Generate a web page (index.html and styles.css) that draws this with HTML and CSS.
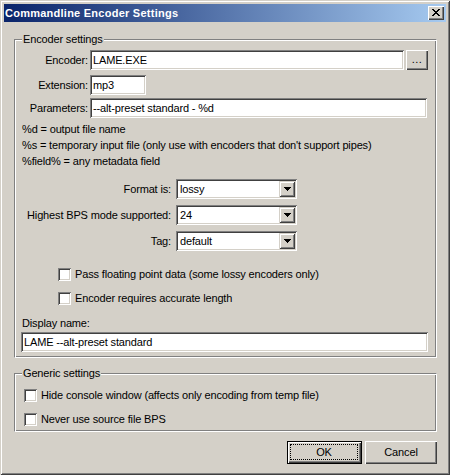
FILE: index.html
```html
<!DOCTYPE html>
<html>
<head>
<meta charset="utf-8">
<link rel="stylesheet" href="styles.css">
</head>
<body>
<div class="window">
  <div class="titlebar">
    <span class="title">Commandline Encoder Settings</span>
    <div class="close">
      <svg width="8" height="7" viewBox="0 0 8 7" shape-rendering="crispEdges"><path d="M0 0h2v1H0zM6 0h2v1H6zM1 1h2v1H1zM5 1h2v1H5zM2 2h4v1H2zM3 3h2v1H3zM2 4h4v1H2zM1 5h2v1H1zM5 5h2v1H5zM0 6h2v1H0zM6 6h2v1H6z" fill="#000"/></svg>
    </div>
  </div>
  <div class="client">
    <div class="group encoder">
      <span class="legend">Encoder settings</span>
      <div class="form-grid">
        <span class="lbl">Encoder:</span>
        <div class="row-enc"><div class="edit w-enc">LAME.EXE</div><div class="btn browse">...</div></div>
        <span class="lbl r2">Extension:</span>
        <div class="edit w-ext r2">mp3</div>
        <span class="lbl r3">Parameters:</span>
        <div class="edit w-par r3">--alt-preset standard - %d</div>
      </div>
      <div class="help">
        <div>%d = output file name</div>
        <div>%s = temporary input file (only use with encoders that don't support pipes)</div>
        <div>%field% = any metadata field</div>
      </div>
      <div class="combo-grid">
        <span class="lbl">Format is:</span>
        <div class="combo"><span class="val">lossy</span><div class="drop"><svg width="7" height="4" viewBox="0 0 7 4" shape-rendering="crispEdges"><path d="M0 0h7v1H0zM1 1h5v1H1zM2 2h3v1H2zM3 3h1v1H3z" fill="#000"/></svg></div></div>
        <span class="lbl">Highest BPS mode supported:</span>
        <div class="combo"><span class="val">24</span><div class="drop"><svg width="7" height="4" viewBox="0 0 7 4" shape-rendering="crispEdges"><path d="M0 0h7v1H0zM1 1h5v1H1zM2 2h3v1H2zM3 3h1v1H3z" fill="#000"/></svg></div></div>
        <span class="lbl">Tag:</span>
        <div class="combo"><span class="val">default</span><div class="drop"><svg width="7" height="4" viewBox="0 0 7 4" shape-rendering="crispEdges"><path d="M0 0h7v1H0zM1 1h5v1H1zM2 2h3v1H2zM3 3h1v1H3z" fill="#000"/></svg></div></div>
      </div>
      <div class="checks enc-checks">
        <div class="check"><span class="box"></span><span>Pass floating point data (some lossy encoders only)</span></div>
        <div class="check"><span class="box"></span><span>Encoder requires accurate length</span></div>
      </div>
      <div class="disp-label">Display name:</div>
      <div class="edit w-disp">LAME --alt-preset standard</div>
    </div>
    <div class="group generic">
      <span class="legend">Generic settings</span>
      <div class="checks gen-checks">
        <div class="check"><span class="box"></span><span>Hide console window (affects only encoding from temp file)</span></div>
        <div class="check"><span class="box"></span><span>Never use source file BPS</span></div>
      </div>
    </div>
    <div class="buttons">
      <div class="btn default"><span class="focus">OK</span></div>
      <div class="btn cancel">Cancel</div>
    </div>
  </div>
</div>
</body>
</html>
```
FILE: styles.css
```css
* { box-sizing: border-box; }
html, body { margin: 0; padding: 0; background: #d4d0c8; }
body {
  font-family: "Liberation Sans", Arial, sans-serif;
  font-size: 11px;
  line-height: 13px;
  letter-spacing: -0.15px;
  color: #000;
}
.window {
  width: 450px;
  height: 475px;
  padding: 4px;
  background: #d4d0c8;
  box-shadow: inset 1px 1px 0 #d4d0c8, inset -1px -1px 0 #404040, inset 2px 2px 0 #fff, inset -2px -2px 0 #808080;
  display: flex;
  flex-direction: column;
}
.titlebar {
  height: 18px;
  flex: none;
  background: linear-gradient(to right, #0a246a, #a6caf0);
  display: flex;
  align-items: center;
  justify-content: space-between;
  padding: 0 2px 0 1px;
}
.title {
  color: #fff;
  font-weight: bold;
  font-size: 11px;
  letter-spacing: 0.25px;
}
.close {
  width: 16px;
  height: 14px;
  background: #d4d0c8;
  box-shadow: inset 1px 1px 0 #fff, inset -1px -1px 0 #404040, inset -2px -2px 0 #808080;
  display: flex;
  align-items: center;
  justify-content: center;
  padding: 0 1px 1px 0;
}
.close svg { display: block; }
.client {
  flex: 1;
  display: flex;
  flex-direction: column;
  padding: 0 9px 0 10px;
}
.group {
  position: relative;
  border-top: 1px solid #808080;
  border-left: 1px solid #808080;
  border-bottom: 1px solid #fff;
  border-right: 1px solid #fff;
  box-shadow: inset 1px 1px 0 #fff, inset -1px -1px 0 #808080;
}
.legend {
  position: absolute;
  top: -7px;
  left: 7px;
  padding: 0 1px;
  background: #d4d0c8;
  line-height: 13px;
}
.encoder {
  margin-top: 17px;
  height: 319px;
  padding: 10px 0 0 0;
}
.edit {
  height: 20px;
  background: #fff;
  box-shadow: inset 1px 1px 0 #808080, inset -1px -1px 0 #fff, inset 2px 2px 0 #404040, inset -2px -2px 0 #d4d0c8;
  padding: 0 3px;
  display: flex;
  align-items: center;
  white-space: nowrap;
  overflow: hidden;
}
.form-grid {
  display: grid;
  grid-template-columns: 73px auto;
  column-gap: 2px;
  align-items: center;
  justify-items: start;
}
.form-grid .lbl { justify-self: end; }
.form-grid .r2 { margin-top: 5px; }
.form-grid .r3 { margin-top: 3px; }
.row-enc { display: flex; gap: 2px; }
.w-enc { width: 314px; }
.w-ext { width: 56px; }
.w-par { width: 337px; }
.btn {
  background: #d4d0c8;
  box-shadow: inset 1px 1px 0 #fff, inset -1px -1px 0 #404040, inset -2px -2px 0 #808080;
  display: flex;
  align-items: center;
  justify-content: center;
}
.browse {
  width: 22px;
  height: 20px;
  padding-bottom: 2px;
  letter-spacing: 0.5px;
}
.help {
  margin-top: 3px;
  padding-left: 7px;
  line-height: 16px;
}
.combo-grid {
  margin-top: 10px;
  display: grid;
  grid-template-columns: 156px 121px;
  column-gap: 5px;
  row-gap: 6px;
  align-items: center;
}
.combo-grid .lbl { justify-self: end; }
.combo {
  height: 20px;
  background: #fff;
  box-shadow: inset 1px 1px 0 #808080, inset -1px -1px 0 #fff, inset 2px 2px 0 #404040, inset -2px -2px 0 #d4d0c8;
  display: flex;
  align-items: center;
  padding: 2px;
}
.combo .val { flex: 1; padding-left: 2px; }
.drop {
  width: 16px;
  height: 16px;
  background: #d4d0c8;
  box-shadow: inset 1px 1px 0 #d4d0c8, inset -1px -1px 0 #404040, inset 2px 2px 0 #fff, inset -2px -2px 0 #808080;
  display: flex;
  align-items: center;
  justify-content: center;
}
.drop svg { display: block; }
.checks { display: flex; flex-direction: column; gap: 11px; }
.check { display: flex; align-items: center; gap: 4px; height: 13px; }
.box {
  width: 13px;
  height: 13px;
  flex: none;
  background: #fff;
  box-shadow: inset 1px 1px 0 #808080, inset -1px -1px 0 #fff, inset 2px 2px 0 #404040, inset -2px -2px 0 #d4d0c8;
}
.enc-checks { margin-top: 17px; padding-left: 43px; }
.disp-label { margin-top: 12px; padding-left: 7px; }
.w-disp { margin-top: 2px; margin-left: 6px; width: 407px; }
.generic {
  margin-top: 15px;
  height: 59px;
  padding: 15px 0 0 9px;
}
.buttons {
  margin-top: 9px;
  display: flex;
  justify-content: flex-end;
  gap: 3px;
}
.buttons .btn { height: 23px; }
.default {
  width: 75px;
  border: 1px solid #000;
  box-shadow: inset 1px 1px 0 #fff, inset -1px -1px 0 #404040, inset -2px -2px 0 #808080;
  padding: 3px;
}
.focus {
  flex: 1;
  align-self: stretch;
  outline: 1px dotted #000;
  outline-offset: 0;
  display: flex;
  align-items: center;
  justify-content: center;
  margin: 0 1px 1px 0;
}
.cancel { width: 72px; }
```
